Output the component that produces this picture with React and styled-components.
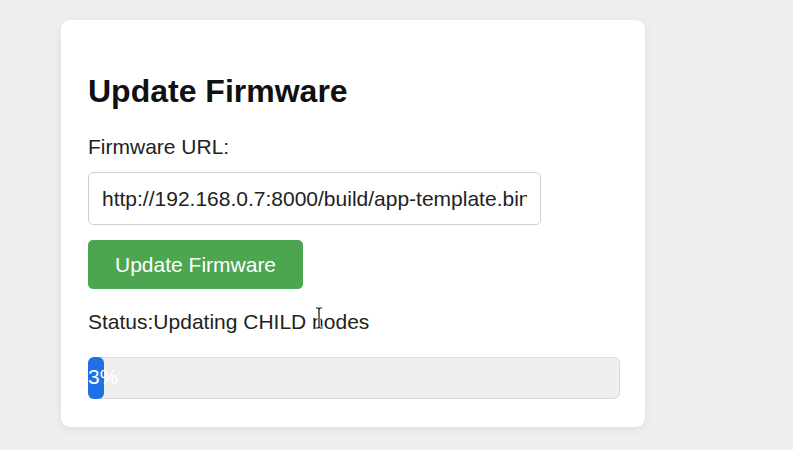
import React from 'react'
import styled, { createGlobalStyle } from 'styled-components'

const GlobalStyle = createGlobalStyle`
  html, body {
    margin: 0;
    padding: 0;
    background: #ffffff;
  }
  body {
    font-family: "Liberation Sans", Arial, sans-serif;
  }
`

const Page = styled.div`
  width: 793px;
  height: 450px;
  overflow: hidden;
  background: #efefef;
  padding: 20px 0 0 61px;
  box-sizing: border-box;
`

const Card = styled.div`
  position: relative;
  width: 584px;
  box-sizing: border-box;
  padding: 53px 25px 28px 27px;
  background: #ffffff;
  border-radius: 9px;
  box-shadow: 0 2px 10px rgba(0, 0, 0, 0.08);
`

const Title = styled.h1`
  margin: 0 0 25px 0;
  font-size: 32px;
  font-weight: 700;
  line-height: 37px;
  color: #111;
`

const Label = styled.div`
  font-size: 21px;
  line-height: 24px;
  color: #222;
  margin-bottom: 13px;
`

const UrlInput = styled.input`
  display: block;
  width: 453px;
  height: 53px;
  box-sizing: border-box;
  padding: 0 13px;
  font-family: "Liberation Sans", Arial, sans-serif;
  font-size: 21px;
  color: #222;
  border: 1px solid #cfcfcf;
  border-radius: 5px;
  background: #fff;
  outline: none;
  margin-bottom: 15px;
`

const Button = styled.button`
  display: block;
  height: 49px;
  padding: 0 27px;
  font-family: "Liberation Sans", Arial, sans-serif;
  font-size: 21px;
  color: #ffffff;
  background: #4ca64f;
  border: none;
  border-radius: 5px;
  margin-bottom: 21px;
`

const Status = styled.div`
  position: relative;
  font-size: 21px;
  line-height: 24px;
  color: #222;
  margin-bottom: 23px;
`

const Cursor = styled.svg`
  position: absolute;
  left: 226px;
  top: -4px;
`

const Progress = styled.div`
  width: 532px;
  height: 42px;
  box-sizing: border-box;
  background: #efefef;
  border: 1px solid #dadada;
  border-radius: 6px;
`

const Fill = styled.div`
  background: #1f6fe6;
  border-radius: 6px;
  color: #fff;
  font-size: 21px;
  line-height: 40px;
  white-space: nowrap;
  margin: -1px 0 0 -1px;
  height: 42px;
`

export default function App() {
  const percent = 3
  return (
    <>
      <GlobalStyle />
      <Page>
        <Card>
          <Title>Update Firmware</Title>
          <Label>Firmware URL:</Label>
          <UrlInput defaultValue="http://192.168.0.7:8000/build/app-template.bin" />
          <Button>Update Firmware</Button>
          <Status>
            Status:Updating CHILD nodes
            <Cursor width="10" height="24" viewBox="0 0 10 24">
              <path d="M2 2 H4 L5 3 L6 2 H8 M5 3 V21 M2 22 H4 L5 21 L6 22 H8" fill="none" stroke="#fff" strokeWidth="3" />
              <path d="M2 2 H4 L5 3 L6 2 H8 M5 3 V21 M2 22 H4 L5 21 L6 22 H8" fill="none" stroke="#111" strokeWidth="1.2" />
            </Cursor>
          </Status>
          <Progress>
            <Fill style={{ width: `${Math.round(532 * percent / 100)}px` }}>{percent}%</Fill>
          </Progress>
        </Card>
      </Page>
    </>
  )
}
